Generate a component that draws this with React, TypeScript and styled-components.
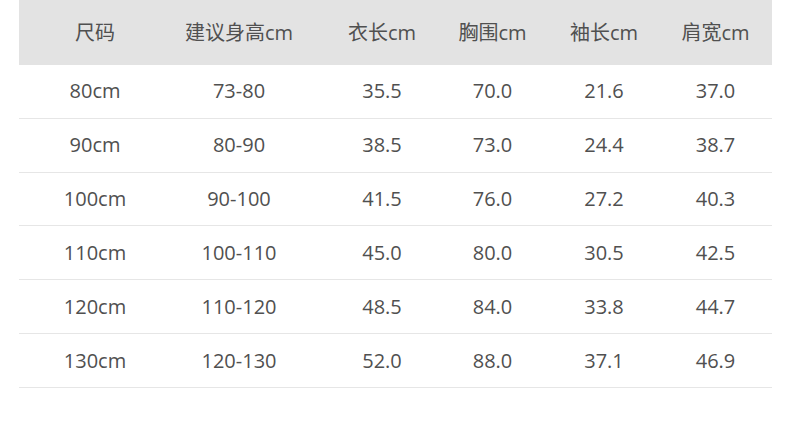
import React from "react";
import styled, { createGlobalStyle } from "styled-components";

const GlobalStyle = createGlobalStyle`
  html, body {
    margin: 0;
    padding: 0;
    background: #ffffff;
  }
  body {
    font-family: "Open Sans", "Noto Sans CJK SC", sans-serif;
    color: #555555;
  }
`;

const Page = styled.div`
  width: 790px;
  height: 431px;
  padding: 0 18px 0 19px;
  box-sizing: border-box;
  background: #ffffff;
`;

const Table = styled.div`
  display: grid;
  grid-template-rows: 65px repeat(6, 1fr);
  width: 753px;
  height: 388px;
`;

const Row = styled.div<{ $header?: boolean }>`
  display: grid;
  grid-template-columns: 152px 136px 150px 71px 152px 71px;
  padding-right: 21px;
  align-items: center;
  box-sizing: border-box;
  background: ${(p) => (p.$header ? "#e3e3e3" : "#ffffff")};
  border-bottom: ${(p) => (p.$header ? "none" : "1px solid #e6e6e6")};
`;

const Cell = styled.div`
  text-align: center;
  white-space: nowrap;
  font-size: 20px;
  line-height: 24px;
  color: #505050;
`;

const headers = ["尺码", "建议身高cm", "衣长cm", "胸围cm", "袖长cm", "肩宽cm"];

const rows: string[][] = [
  ["80cm", "73-80", "35.5", "70.0", "21.6", "37.0"],
  ["90cm", "80-90", "38.5", "73.0", "24.4", "38.7"],
  ["100cm", "90-100", "41.5", "76.0", "27.2", "40.3"],
  ["110cm", "100-110", "45.0", "80.0", "30.5", "42.5"],
  ["120cm", "110-120", "48.5", "84.0", "33.8", "44.7"],
  ["130cm", "120-130", "52.0", "88.0", "37.1", "46.9"],
];

export default function App() {
  return (
    <>
      <GlobalStyle />
      <Page>
        <Table>
          <Row $header>
            {headers.map((h) => (
              <Cell key={h}>{h}</Cell>
            ))}
          </Row>
          {rows.map((r) => (
            <Row key={r[0]}>
              {r.map((c, i) => (
                <Cell key={i}>{c}</Cell>
              ))}
            </Row>
          ))}
        </Table>
      </Page>
    </>
  );
}
